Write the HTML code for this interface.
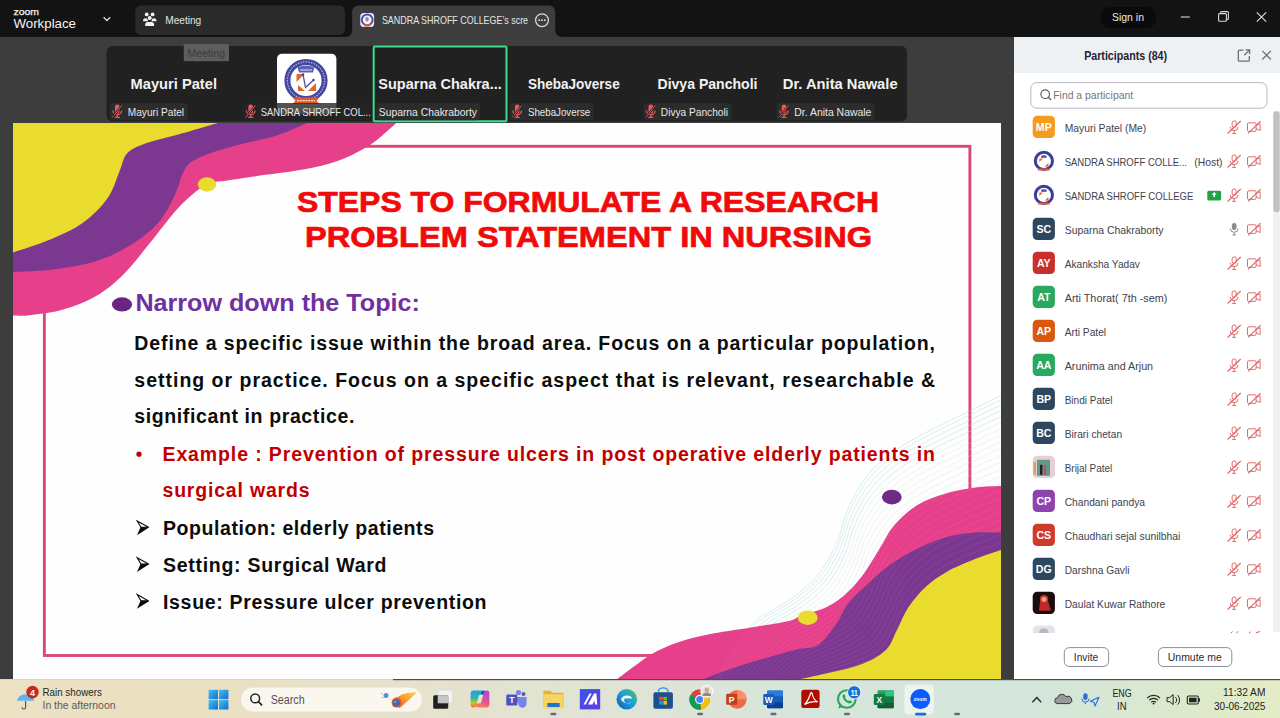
<!DOCTYPE html>
<html><head><meta charset="utf-8">
<style>
html,body{margin:0;padding:0;width:1280px;height:718px;overflow:hidden;background:#3d3d3d}
svg{display:block}
text{font-family:"Liberation Sans",sans-serif}
</style></head>
<body>
<svg width="1280" height="718" viewBox="0 0 1280 718">
<defs>
 <linearGradient id="tb" x1="0" y1="0" x2="1" y2="0">
  <stop offset="0" stop-color="#ece1c2"/>
  <stop offset="0.18" stop-color="#eae0c2"/>
  <stop offset="0.34" stop-color="#e5e2cd"/>
  <stop offset="0.5" stop-color="#dfe4d6"/>
  <stop offset="0.62" stop-color="#d7e5db"/>
  <stop offset="0.8" stop-color="#d3e6dc"/>
  <stop offset="0.9" stop-color="#dae8d0"/>
  <stop offset="1" stop-color="#e4ecc4"/>
 </linearGradient>
 <clipPath id="slideclip"><rect x="13" y="123" width="988" height="556"/></clipPath>
</defs>
<!-- main bg -->
<rect x="0" y="0" width="1280" height="718" fill="#3d3d3d"/>
<!-- TOPBAR -->
<g id="topbar">
 <rect x="0" y="0" width="1280" height="37" fill="#131313"/>
 <text x="13.5" y="14.6" font-size="9.6" fill="#f2f2f2" stroke="#f2f2f2" stroke-width="0.25" textLength="25.5" lengthAdjust="spacingAndGlyphs">zoom</text>
 <text x="13.5" y="27.5" font-size="12.8" fill="#f4f4f4" textLength="62.5" lengthAdjust="spacingAndGlyphs">Workplace</text>
 <polyline points="103.6,17.2 106.9,20.5 110.2,17.2" fill="none" stroke="#d8d8d8" stroke-width="1.3"/>
 <rect x="135.25" y="5.6" width="209.75" height="29.4" rx="6" fill="#2a2a2a"/>
 <g fill="#f4f4f4">
  <circle cx="146.7" cy="14.4" r="1.9"/><circle cx="152.6" cy="14.4" r="1.9"/><circle cx="149.7" cy="18.1" r="2"/>
  <path d="M143,21.3 a2.45,3 0 0 1 4.9,0 z"/><path d="M151.6,21.3 a2.45,3 0 0 1 4.9,0 z"/>
  <path d="M145.2,26.1 v-1.6 a2.5,2.5 0 0 1 2.5,-2.5 h3.9 a2.5,2.5 0 0 1 2.5,2.5 v1.6 z"/>
 </g>
 <text x="165.25" y="24.4" font-size="11.5" fill="#e4e4e4" textLength="36" lengthAdjust="spacingAndGlyphs">Meeting</text>
 <path d="M345,37 q7,0 7.2,-7 v-18.6 a6,6 0 0 1 6,-6 h191 a6,6 0 0 1 6,6 v18.6 q0.2,7 7.2,7 z" fill="#3d3d3d"/>
 <g>
  <rect x="360.3" y="13" width="13.8" height="14.1" rx="3.5" fill="#f4f4fa"/>
  <circle cx="367.2" cy="19.8" r="5.4" fill="none" stroke="#4f4fa6" stroke-width="2"/>
  <path d="M365,18.5 l2,-2 l2,2 l-1,3 h-2 z" fill="#9a8ab8"/>
  <path d="M363.4,24.2 h7.6 l-1,2.2 h-5.6 z" fill="#e0603a"/>
 </g>
 <text x="381.9" y="23.6" font-size="10.9" fill="#e6e6e6" textLength="146.2" lengthAdjust="spacingAndGlyphs">SANDRA SHROFF COLLEGE&#8217;s scre</text>
 <circle cx="542" cy="20.2" r="6.4" fill="none" stroke="#dcdcdc" stroke-width="1.2"/>
 <circle cx="539.2" cy="20.2" r="0.9" fill="#e6e6e6"/><circle cx="542" cy="20.2" r="0.9" fill="#e6e6e6"/><circle cx="544.8" cy="20.2" r="0.9" fill="#e6e6e6"/>
 <rect x="1101" y="7" width="55" height="21" rx="9" fill="#0a0a0a"/>
 <text x="1112" y="21" font-size="11.6" fill="#e8e8e8" textLength="32" lengthAdjust="spacingAndGlyphs">Sign in</text>
 <line x1="1180.8" y1="17" x2="1189.8" y2="17" stroke="#d8d8d8" stroke-width="1.1"/>
 <rect x="1218.6" y="13.6" width="7.8" height="7.6" rx="1" fill="none" stroke="#d8d8d8" stroke-width="1.1"/>
 <path d="M1220.6,13.6 v-1 a1,1 0 0 1 1,-1 h5.8 a1,1 0 0 1 1,1 v5.8 a1,1 0 0 1 -1,1 h-1" fill="none" stroke="#d8d8d8" stroke-width="1.1"/>
 <path d="M1256.8,12.4 l9.4,9.2 M1266.2,12.4 l-9.4,9.2" stroke="#d8d8d8" stroke-width="1.2"/>
</g>
<!-- /TOPBAR -->
<!-- THUMBS -->
<g id="thumbs">
 <rect x="106.5" y="46" width="800.5" height="75.5" rx="6" fill="#212121"/>
 <defs>
  <g id="mmic">
   <path d="M3.2,0.8 a2.3,2.3 0 0 1 4.6,0 v4.6 a2.3,2.3 0 0 1 -4.6,0 z" fill="#e35b5b"/>
   <path d="M1.2,4.6 a4.3,4.3 0 0 0 8.6,0" fill="none" stroke="#e35b5b" stroke-width="1.3"/>
   <path d="M5.5,9 v2.2 M3,11.3 h5" stroke="#e35b5b" stroke-width="1.3"/>
   <path d="M0.3,11.6 L10.5,-0.8" stroke="#1f1f1f" stroke-width="2.2"/>
   <path d="M0.6,11.4 L10.2,-0.6" stroke="#e35b5b" stroke-width="1"/>
  </g>
 </defs>
 <!-- tile 1 -->
 <text x="130.6" y="89.2" font-size="14.6" font-weight="bold" fill="#f2f2f2" textLength="86.4" lengthAdjust="spacingAndGlyphs">Mayuri Patel</text>
 <rect x="109.9" y="103" width="78" height="17.3" rx="4" fill="#2c2c2c"/>
 <use href="#mmic" x="111.8" y="106"/>
 <text x="127.8" y="115.7" font-size="11.6" fill="#e8e8e8" textLength="56.3" lengthAdjust="spacingAndGlyphs">Mayuri Patel</text>
 <!-- tooltip -->
 <rect x="183.8" y="44" width="45.2" height="17.2" fill="#5e5e5e"/>
 <text x="187.5" y="56.8" font-size="11" fill="#3c3c3c" textLength="37.5" lengthAdjust="spacingAndGlyphs">Meeting</text>
 <!-- tile 2 logo -->
 <rect x="277" y="53.7" width="59.4" height="60" rx="5" fill="#ffffff"/>
 <circle cx="306" cy="80.5" r="18.6" fill="none" stroke="#4447a2" stroke-width="6"/>
 <circle cx="306" cy="80.5" r="18.6" fill="none" stroke="#c8c8e8" stroke-width="1.2" stroke-dasharray="1.6 1.1" transform="rotate(-200 306 80.5)" stroke-opacity="0.8"/>
 <path d="M297.5,67.5 q8.5,-4 17,0 l-1.5,5 h-14 z" fill="#5d60b8"/>
 <path d="M300,70 h12" stroke="#ffffff" stroke-width="0.8"/>
 <path d="M296.5,74 h8 l-8,8 z M316,83 v8 h-8 z M298,85 l7,6 h-7 z" fill="#e6632e"/>
 <path d="M303,74.5 l2.5,13 l8,-7.5" fill="none" stroke="#4a4f9a" stroke-width="1.3"/>
 <circle cx="303" cy="74.5" r="1.2" fill="#3a3f8a"/><circle cx="313.5" cy="80" r="1.2" fill="#3a3f8a"/>
 <path d="M292.5,97.5 l3,3.2 l-3,3.3 h27 l-3,-3.3 l3,-3.2 z" fill="#e45a2c"/>
 <path d="M297,100.7 h18" stroke="#ffd8c8" stroke-width="1.2" stroke-dasharray="2 0.8"/>
 <rect x="243.3" y="103" width="128" height="17.3" rx="4" fill="#262626" fill-opacity="0.8"/>
 <use href="#mmic" x="245.2" y="106"/>
 <text x="260.8" y="115.7" font-size="11.6" fill="#e8e8e8" textLength="110" lengthAdjust="spacingAndGlyphs">SANDRA SHROFF COL...</text>
 <!-- tile 3 active -->
 <rect x="373.7" y="46.6" width="132.8" height="74.6" rx="1" fill="none" stroke="#3bdc8e" stroke-width="2"/>
 <text x="378.3" y="89.2" font-size="14.6" font-weight="bold" fill="#f2f2f2" textLength="123.5" lengthAdjust="spacingAndGlyphs">Suparna Chakra...</text>
 <rect x="376.3" y="103" width="104" height="17.3" rx="4" fill="#2c2c2c"/>
 <text x="378.8" y="115.7" font-size="11.6" fill="#e8e8e8" textLength="98.2" lengthAdjust="spacingAndGlyphs">Suparna Chakraborty</text>
 <!-- tile 4 -->
 <text x="527.9" y="89.2" font-size="14.6" font-weight="bold" fill="#f2f2f2" textLength="91.8" lengthAdjust="spacingAndGlyphs">ShebaJoverse</text>
 <rect x="509.8" y="103" width="83.7" height="17.3" rx="4" fill="#2c2c2c"/>
 <use href="#mmic" x="511.7" y="106"/>
 <text x="527.9" y="115.7" font-size="11.6" fill="#e8e8e8" textLength="62.3" lengthAdjust="spacingAndGlyphs">ShebaJoverse</text>
 <!-- tile 5 -->
 <text x="657.5" y="89.2" font-size="14.6" font-weight="bold" fill="#f2f2f2" textLength="100" lengthAdjust="spacingAndGlyphs">Divya Pancholi</text>
 <rect x="643.4" y="103" width="87.9" height="17.3" rx="4" fill="#2c2c2c"/>
 <use href="#mmic" x="645.3" y="106"/>
 <text x="660.8" y="115.7" font-size="11.6" fill="#e8e8e8" textLength="67.2" lengthAdjust="spacingAndGlyphs">Divya Pancholi</text>
 <!-- tile 6 -->
 <text x="782.8" y="89.2" font-size="14.6" font-weight="bold" fill="#f2f2f2" textLength="114.8" lengthAdjust="spacingAndGlyphs">Dr. Anita Nawale</text>
 <rect x="776.6" y="103" width="98.1" height="17.3" rx="4" fill="#2c2c2c"/>
 <use href="#mmic" x="778.5" y="106"/>
 <text x="794.3" y="115.7" font-size="11.6" fill="#e8e8e8" textLength="77.1" lengthAdjust="spacingAndGlyphs">Dr. Anita Nawale</text>
</g>
<!-- /THUMBS -->
<!-- SLIDE -->
<g id="slide">
 <rect x="13" y="123" width="988" height="556" fill="#fefefe"/>
 <g clip-path="url(#slideclip)">
  <rect x="44.35" y="146.3" width="925.55" height="509.2" fill="none" stroke="#da487a" stroke-width="2.9"/>
  <path d="M13,118 L401.0,118 L396.0,123.2 C393.4,125.5 385.9,132.6 380.5,136.9 C375.1,141.2 370.5,145.0 363.3,149.0 C356.1,153.0 347.5,157.6 337.5,161.0 C327.5,164.4 316.0,167.2 303.1,169.6 C290.2,172.0 273.1,173.8 260.2,175.6 C247.3,177.4 234.4,179.4 225.8,180.7 C217.2,182.0 214.3,180.9 208.6,183.3 C202.8,185.8 197.0,190.6 191.3,195.4 C185.6,200.2 181.1,204.6 174.6,212.0 C168.1,219.4 160.7,229.8 152.3,240.0 C143.9,250.2 133.7,264.1 124.4,273.4 C115.1,282.7 106.8,289.7 96.6,295.7 C86.4,301.7 74.2,306.4 63.0,309.6 C51.9,312.9 38.0,314.2 29.7,315.2 C21.4,316.2 15.8,315.4 13.0,315.5 L13,118 z" fill="#e6408b"/>
  <path d="M13,118 L311.6,118 L306.6,123.2 C301.7,125.2 287.9,131.8 277.3,135.2 C266.7,138.6 253.7,141.0 243.0,143.8 C232.3,146.6 221.6,149.2 213.0,152.2 C204.4,155.2 196.3,158.5 191.3,162.0 C186.3,165.5 185.8,167.4 183.0,173.0 C180.2,178.6 178.8,187.0 174.6,195.4 C170.4,203.8 165.2,214.9 157.8,223.3 C150.4,231.7 140.2,239.3 130.0,245.6 C119.8,251.9 109.1,257.0 96.6,260.9 C84.1,264.8 68.7,267.3 54.8,269.2 C40.9,271.1 20.0,271.5 13.0,272.0 L13,118 z" fill="#7c3890"/>
  <path d="M13,118 L222.2,118 L217.2,123.2 C211.0,125.0 192.2,130.5 180.0,134.0 C167.8,137.5 152.8,140.7 144.0,144.0 C135.2,147.3 131.0,149.3 127.0,153.6 C123.0,157.9 123.2,162.6 120.0,170.0 C116.8,177.4 113.9,189.2 107.7,198.0 C101.5,206.8 92.4,216.0 82.6,223.0 C72.8,230.0 60.6,235.1 49.0,240.0 C37.4,244.9 19.0,250.4 13.0,252.5 L13,118 z" fill="#e9dc2f"/>
  <ellipse cx="207" cy="184.5" rx="9.2" ry="7.2" fill="#e9dc2f"/>
<!--LINES-->
  <g fill="none" stroke="#9fd3d3" stroke-width="0.55" stroke-opacity="0.75"><path d="M690.0,712.0 C693.9,707.0 706.1,692.4 713.2,681.9 C720.4,671.5 725.8,659.7 732.9,649.5 C740.1,639.3 746.8,628.7 756.1,620.6 C765.3,612.4 778.3,608.1 788.4,600.7 C798.6,593.3 809.0,585.6 816.9,576.2 C824.9,566.8 830.9,555.6 836.2,544.3 C841.4,533.0 842.9,519.7 848.1,508.2 C853.3,496.8 859.6,485.1 867.3,475.5 C875.1,466.0 884.6,458.2 894.7,450.9 C904.7,443.6 916.3,437.7 927.5,431.7 C938.6,425.7 950.2,420.5 961.5,414.9 C972.9,409.3 984.2,403.6 995.6,398.1 C1007.0,392.7 1024.3,384.7 1030.0,382.0"/><path d="M692.4,711.7 C696.3,706.7 708.4,692.3 715.6,682.1 C722.7,671.8 728.2,660.2 735.3,650.2 C742.4,640.2 749.2,629.9 758.4,621.9 C767.6,613.9 780.5,609.6 790.5,602.3 C800.6,595.0 810.9,587.5 818.8,578.2 C826.7,568.9 832.7,557.8 837.8,546.6 C843.0,535.4 844.6,522.3 849.7,511.0 C854.9,499.6 861.1,488.1 868.8,478.6 C876.5,469.2 886.0,461.5 896.0,454.2 C905.9,447.0 917.4,441.2 928.4,435.3 C939.5,429.4 950.9,424.2 962.2,418.7 C973.4,413.2 984.6,407.6 995.9,402.2 C1007.2,396.8 1024.3,389.0 1030.0,386.3"/><path d="M695.4,711.3 C699.3,706.4 711.3,692.3 718.4,682.3 C725.6,672.2 731.0,660.8 738.2,651.0 C745.3,641.2 752.2,631.3 761.3,623.5 C770.5,615.7 783.1,611.5 793.1,604.3 C803.0,597.2 813.3,589.8 821.1,580.7 C828.9,571.5 834.7,560.5 839.8,549.4 C845.0,538.3 846.6,525.4 851.7,514.3 C856.9,503.1 863.1,491.7 870.7,482.4 C878.3,473.1 887.7,465.5 897.5,458.4 C907.3,451.2 918.7,445.6 929.6,439.7 C940.5,433.9 951.8,428.8 962.9,423.4 C974.0,417.9 985.1,412.5 996.3,407.2 C1007.5,401.9 1024.4,394.2 1030.0,391.6"/><path d="M698.6,710.8 C702.5,706.1 714.4,692.3 721.6,682.4 C728.7,672.6 734.2,661.5 741.3,651.9 C748.5,642.4 755.4,632.8 764.4,625.2 C773.5,617.7 786.0,613.5 795.8,606.5 C805.7,599.5 815.8,592.3 823.5,583.3 C831.2,574.3 837.0,563.4 842.0,552.5 C847.1,541.5 848.8,528.8 853.9,517.8 C859.0,506.8 865.1,495.7 872.7,486.5 C880.2,477.3 889.5,469.8 899.2,462.8 C908.9,455.8 920.1,450.2 930.9,444.5 C941.6,438.7 952.8,433.7 963.8,428.4 C974.7,423.1 985.7,417.7 996.7,412.6 C1007.8,407.4 1024.5,399.9 1030.0,397.4"/><path d="M702.0,710.4 C705.8,705.8 717.7,692.2 724.8,682.6 C731.9,673.1 737.4,662.2 744.6,652.9 C751.7,643.6 758.7,634.4 767.7,627.1 C776.7,619.7 789.0,615.6 798.7,608.8 C808.5,602.0 818.5,594.9 826.1,586.1 C833.7,577.2 839.3,566.4 844.3,555.7 C849.3,544.9 851.1,532.4 856.1,521.6 C861.2,510.8 867.3,499.8 874.8,490.8 C882.3,481.8 891.4,474.4 901.0,467.5 C910.5,460.6 921.6,455.1 932.2,449.5 C942.8,443.9 953.8,438.9 964.6,433.7 C975.5,428.5 986.3,423.3 997.2,418.2 C1008.1,413.2 1024.5,405.9 1030.0,403.4"/></g>
  <g fill="none" stroke="#c6d2d6" stroke-width="0.5" stroke-opacity="0.6"><path d="M705.6,709.9 C709.3,705.4 721.1,692.2 728.2,682.8 C735.3,673.5 740.8,662.9 748.0,653.9 C755.1,644.9 762.2,636.1 771.1,629.0 C780.1,621.8 792.1,617.9 801.7,611.2 C811.3,604.5 821.3,597.7 828.8,589.0 C836.3,580.2 841.8,569.6 846.7,559.0 C851.7,548.4 853.4,536.1 858.5,525.5 C863.5,514.9 869.6,504.2 877.0,495.3 C884.4,486.4 893.4,479.1 902.8,472.4 C912.2,465.6 923.1,460.2 933.6,454.7 C944.0,449.2 954.9,444.3 965.5,439.2 C976.2,434.1 986.9,429.0 997.6,424.1 C1008.4,419.2 1024.6,412.1 1030.0,409.7"/><path d="M709.2,709.4 C712.9,705.0 724.7,692.1 731.7,683.1 C738.8,674.0 744.4,663.6 751.5,654.9 C758.7,646.2 765.7,637.8 774.6,630.9 C783.5,624.0 795.3,620.2 804.8,613.7 C814.3,607.2 824.2,600.5 831.6,591.9 C839.0,583.4 844.3,572.8 849.2,562.4 C854.1,552.0 855.9,539.9 860.9,529.5 C865.9,519.1 871.9,508.6 879.2,499.9 C886.5,491.2 895.4,484.0 904.7,477.4 C914.0,470.8 924.7,465.5 935.0,460.1 C945.3,454.6 955.9,449.9 966.5,444.9 C977.0,439.9 987.5,435.0 998.1,430.2 C1008.7,425.4 1024.7,418.5 1030.0,416.1"/><path d="M712.9,708.9 C716.6,704.7 728.3,692.1 735.3,683.3 C742.3,674.4 748.0,664.3 755.1,656.0 C762.3,647.6 769.4,639.5 778.2,632.9 C787.0,626.3 798.6,622.5 808.0,616.2 C817.4,609.9 827.1,603.3 834.4,595.0 C841.7,586.6 846.9,576.1 851.7,565.9 C856.6,555.7 858.4,543.9 863.4,533.7 C868.3,523.5 874.3,513.2 881.6,504.6 C888.8,496.1 897.5,489.1 906.7,482.6 C915.8,476.0 926.3,470.9 936.5,465.6 C946.6,460.2 957.1,455.6 967.4,450.7 C977.8,445.9 988.1,441.0 998.6,436.4 C1009.0,431.7 1024.8,425.0 1030.0,422.7"/><path d="M716.7,708.4 C720.4,704.3 731.9,692.1 739.0,683.5 C746.0,674.9 751.6,665.1 758.8,657.0 C765.9,648.9 773.1,641.3 781.9,635.0 C790.6,628.6 802.0,624.9 811.3,618.8 C820.5,612.6 830.2,606.3 837.3,598.1 C844.5,589.9 849.6,579.5 854.3,569.5 C859.1,559.5 861.0,547.9 865.9,537.9 C870.8,527.9 876.8,517.8 883.9,509.5 C891.0,501.1 899.6,494.2 908.6,487.8 C917.7,481.4 928.0,476.4 938.0,471.2 C947.9,466.0 958.2,461.4 968.4,456.7 C978.6,451.9 988.8,447.2 999.0,442.7 C1009.3,438.2 1024.8,431.7 1030.0,429.5"/><path d="M720.6,707.9 C724.3,703.9 735.7,692.0 742.7,683.7 C749.7,675.4 755.4,665.9 762.5,658.1 C769.7,650.3 777.0,643.2 785.6,637.0 C794.3,630.9 805.5,627.3 814.6,621.4 C823.7,615.4 833.2,609.3 840.3,601.3 C847.4,593.2 852.3,583.0 857.0,573.2 C861.7,563.3 863.6,552.0 868.5,542.2 C873.4,532.4 879.3,522.6 886.3,514.4 C893.3,506.2 901.8,499.4 910.7,493.2 C919.5,486.9 929.7,482.0 939.5,476.9 C949.3,471.8 959.4,467.4 969.4,462.7 C979.4,458.1 989.4,453.6 999.5,449.2 C1009.6,444.8 1024.9,438.5 1030.0,436.4"/><path d="M724.5,707.4 C728.2,703.5 739.5,692.0 746.5,684.0 C753.5,675.9 759.2,666.7 766.4,659.2 C773.5,651.8 780.8,645.0 789.4,639.2 C798.0,633.3 809.0,629.8 817.9,624.1 C826.9,618.3 836.4,612.3 843.3,604.5 C850.3,596.6 855.0,586.5 859.6,576.9 C864.3,567.2 866.3,556.1 871.1,546.6 C876.0,537.0 881.8,527.4 888.8,519.4 C895.7,511.4 904.0,504.7 912.7,498.6 C921.4,492.5 931.4,487.7 941.0,482.7 C950.6,477.8 960.6,473.4 970.4,468.9 C980.2,464.4 990.1,460.0 1000.1,455.8 C1010.0,451.5 1025.0,445.5 1030.0,443.4"/><path d="M728.5,706.9 C732.2,703.1 743.4,691.9 750.3,684.2 C757.3,676.4 763.1,667.5 770.2,660.3 C777.4,653.2 784.8,646.9 793.3,641.3 C801.8,635.7 812.5,632.4 821.4,626.8 C830.2,621.2 839.6,615.4 846.4,607.7 C853.2,600.1 857.8,590.1 862.4,580.7 C866.9,571.2 869.0,560.3 873.8,551.0 C878.6,541.6 884.4,532.3 891.2,524.5 C898.1,516.7 906.3,510.1 914.8,504.2 C923.4,498.2 933.2,493.5 942.6,488.6 C952.0,483.8 961.8,479.5 971.4,475.2 C981.1,470.8 990.8,466.5 1000.6,462.4 C1010.3,458.3 1025.1,452.5 1030.0,450.5"/><path d="M732.6,706.3 C736.2,702.7 747.3,691.9 754.2,684.4 C761.2,676.9 767.0,668.3 774.2,661.5 C781.3,654.7 788.8,648.8 797.2,643.5 C805.7,638.2 816.1,634.9 824.8,629.5 C833.5,624.1 842.8,618.6 849.5,611.1 C856.2,603.6 860.6,593.7 865.1,584.5 C869.6,575.2 871.7,564.6 876.5,555.5 C881.3,546.3 887.0,537.3 893.8,529.7 C900.5,522.0 908.5,515.6 916.9,509.8 C925.3,503.9 934.9,499.3 944.2,494.6 C953.4,489.9 963.0,485.7 972.5,481.5 C982.0,477.3 991.5,473.2 1001.1,469.2 C1010.7,465.2 1025.2,459.6 1030.0,457.7"/><path d="M736.7,705.8 C740.3,702.3 751.3,691.8 758.2,684.7 C765.1,677.5 771.0,669.1 778.1,662.6 C785.3,656.2 792.8,650.8 801.2,645.7 C809.6,640.7 819.7,637.5 828.3,632.3 C836.9,627.1 846.0,621.7 852.6,614.4 C859.2,607.1 863.5,597.4 867.9,588.4 C872.4,579.3 874.5,569.0 879.2,560.0 C883.9,551.1 889.7,542.3 896.3,534.9 C903.0,527.4 910.8,521.2 919.1,515.5 C927.3,509.8 936.7,505.3 945.8,500.7 C954.9,496.1 964.2,492.0 973.5,487.9 C982.8,483.8 992.2,479.9 1001.6,476.1 C1011.0,472.2 1025.3,466.9 1030.0,465.0"/><path d="M740.9,705.2 C744.4,701.8 755.3,691.8 762.2,684.9 C769.1,678.0 775.0,670.0 782.1,663.8 C789.3,657.7 796.9,652.7 805.2,648.0 C813.5,643.2 823.4,640.1 831.9,635.1 C840.3,630.1 849.3,625.0 855.8,617.8 C862.3,610.7 866.4,601.1 870.8,592.3 C875.1,583.4 877.3,573.3 882.0,564.7 C886.7,556.0 892.3,547.4 898.9,540.2 C905.4,532.9 913.2,526.8 921.3,521.2 C929.4,515.6 938.5,511.3 947.4,506.8 C956.3,502.3 965.5,498.4 974.6,494.4 C983.7,490.5 992.9,486.7 1002.1,483.0 C1011.4,479.3 1025.4,474.2 1030.0,472.4"/><path d="M745.1,704.7 C748.6,701.4 759.4,691.8 766.2,685.1 C773.1,678.5 779.0,670.8 786.2,665.0 C793.4,659.2 801.0,654.7 809.3,650.2 C817.5,645.7 827.2,642.8 835.5,637.9 C843.8,633.1 852.7,628.2 859.0,621.3 C865.4,614.3 869.3,604.9 873.6,596.2 C877.9,587.6 880.1,577.8 884.8,569.3 C889.4,560.9 895.1,552.5 901.5,545.5 C907.9,538.4 915.5,532.4 923.5,527.0 C931.4,521.6 940.4,517.3 949.1,513.0 C957.8,508.7 966.7,504.8 975.7,501.0 C984.6,497.2 993.6,493.5 1002.7,490.0 C1011.7,486.5 1025.4,481.6 1030.0,479.9"/><path d="M749.3,704.1 C752.8,701.0 763.5,691.7 770.3,685.4 C777.2,679.1 783.1,671.7 790.3,666.2 C797.5,660.7 805.2,656.7 813.3,652.5 C821.5,648.3 830.9,645.4 839.1,640.8 C847.2,636.2 856.0,631.5 862.3,624.7 C868.5,618.0 872.3,608.7 876.5,600.2 C880.7,591.8 883.0,582.2 887.6,574.0 C892.2,565.8 897.8,557.7 904.1,550.9 C910.5,544.0 917.9,538.1 925.7,532.9 C933.4,527.6 942.2,523.5 950.7,519.3 C959.2,515.1 968.0,511.3 976.8,507.6 C985.5,503.9 994.4,500.4 1003.2,497.1 C1012.1,493.7 1025.5,489.0 1030.0,487.4"/><path d="M753.6,703.5 C757.1,700.5 767.6,691.7 774.5,685.6 C781.3,679.6 787.3,672.5 794.5,667.4 C801.6,662.2 809.4,658.8 817.5,654.8 C825.5,650.9 834.7,648.1 842.7,643.7 C850.8,639.3 859.4,634.8 865.5,628.2 C871.7,621.7 875.3,612.5 879.4,604.3 C883.6,596.0 885.9,586.8 890.5,578.8 C895.0,570.8 900.5,563.0 906.8,556.3 C913.0,549.7 920.3,543.9 927.9,538.8 C935.5,533.7 944.1,529.7 952.4,525.6 C960.7,521.5 969.3,517.9 977.9,514.3 C986.4,510.8 995.1,507.4 1003.8,504.2 C1012.5,501.0 1025.6,496.5 1030.0,495.0"/><path d="M757.9,702.9 C761.3,700.1 771.8,691.6 778.6,685.9 C785.4,680.2 791.5,673.4 798.6,668.6 C805.8,663.8 813.7,660.8 821.7,657.1 C829.6,653.5 838.6,650.9 846.4,646.6 C854.3,642.4 862.9,638.2 868.8,631.8 C874.8,625.4 878.3,616.4 882.3,608.4 C886.4,600.3 888.8,591.3 893.3,583.6 C897.9,575.8 903.3,568.3 909.5,561.8 C915.6,555.3 922.7,549.7 930.2,544.8 C937.6,539.8 946.0,535.9 954.1,532.0 C962.2,528.0 970.6,524.5 979.0,521.1 C987.4,517.7 995.8,514.5 1004.3,511.4 C1012.8,508.3 1025.7,504.1 1030.0,502.7"/><path d="M762.2,702.4 C765.7,699.7 776.0,691.6 782.8,686.1 C789.6,680.7 795.7,674.3 802.9,669.8 C810.0,665.4 818.0,662.9 825.9,659.5 C833.7,656.1 842.4,653.6 850.2,649.6 C857.9,645.6 866.3,641.5 872.2,635.3 C878.0,629.1 881.3,620.3 885.3,612.5 C889.3,604.6 891.8,595.9 896.2,588.4 C900.7,580.9 906.1,573.6 912.2,567.3 C918.2,561.1 925.2,555.6 932.5,550.8 C939.7,546.0 947.9,542.2 955.8,538.4 C963.7,534.6 971.9,531.2 980.1,527.9 C988.3,524.6 996.6,521.6 1004.9,518.7 C1013.2,515.8 1025.8,511.8 1030.0,510.4"/><path d="M766.6,701.8 C770.0,699.2 780.3,691.5 787.0,686.4 C793.8,681.3 799.9,675.1 807.1,671.1 C814.3,667.0 822.3,664.9 830.1,661.9 C837.9,658.8 846.3,656.4 853.9,652.6 C861.5,648.7 869.8,644.9 875.5,638.9 C881.3,632.9 884.4,624.2 888.3,616.6 C892.2,609.0 894.7,600.5 899.2,593.3 C903.6,586.0 909.0,579.0 914.9,572.9 C920.8,566.9 927.6,561.5 934.8,556.9 C941.9,552.2 949.8,548.6 957.5,544.9 C965.3,541.2 973.2,537.9 981.2,534.8 C989.2,531.6 997.3,528.8 1005.5,526.0 C1013.6,523.2 1025.9,519.5 1030.0,518.2"/><path d="M771.1,701.2 C774.4,698.8 784.6,691.5 791.3,686.7 C798.0,681.8 804.2,676.0 811.4,672.3 C818.6,668.6 826.7,667.0 834.4,664.2 C842.1,661.5 850.3,659.2 857.7,655.6 C865.1,651.9 873.3,648.3 878.9,642.5 C884.5,636.8 887.4,628.2 891.3,620.8 C895.2,613.4 897.7,605.2 902.1,598.2 C906.5,591.1 911.8,584.4 917.6,578.5 C923.5,572.7 930.1,567.5 937.1,563.0 C944.0,558.5 951.7,555.0 959.3,551.4 C966.8,547.9 974.6,544.7 982.4,541.7 C990.2,538.7 998.1,536.0 1006.0,533.4 C1014.0,530.8 1026.0,527.3 1030.0,526.1"/><path d="M775.5,700.6 C778.9,698.3 788.9,691.4 795.6,686.9 C802.3,682.4 808.5,676.9 815.7,673.6 C822.9,670.2 831.0,669.1 838.7,666.6 C846.3,664.1 854.2,662.0 861.5,658.6 C868.8,655.2 876.9,651.8 882.3,646.2 C887.8,640.6 890.5,632.2 894.3,625.0 C898.1,617.8 900.7,609.9 905.1,603.1 C909.4,596.3 914.7,589.9 920.4,584.2 C926.1,578.5 932.6,573.5 939.4,569.2 C946.2,564.8 953.6,561.4 961.0,558.0 C968.4,554.6 975.9,551.5 983.5,548.7 C991.1,545.8 998.8,543.3 1006.6,540.8 C1014.3,538.4 1026.1,535.2 1030.0,534.0"/><path d="M780.0,700.0 C783.3,697.9 793.2,691.4 799.9,687.2 C806.6,683.0 812.8,677.8 820.0,674.8 C827.2,671.8 835.5,671.3 843.0,669.1 C850.6,666.9 858.2,664.8 865.3,661.6 C872.4,658.4 880.4,655.3 885.8,649.9 C891.1,644.5 893.7,636.2 897.4,629.2 C901.1,622.3 903.8,614.6 908.1,608.1 C912.4,601.5 917.6,595.4 923.2,589.9 C928.8,584.5 935.1,579.6 941.7,575.4 C948.3,571.1 955.6,567.9 962.8,564.6 C969.9,561.3 977.3,558.4 984.7,555.7 C992.1,553.0 999.6,550.6 1007.2,548.3 C1014.7,546.0 1026.2,543.0 1030.0,542.0"/></g>
<!--/LINES-->
  <path d="M612.0,684.0 C613.0,683.0 614.3,681.4 618.2,678.3 C622.1,675.2 629.7,669.5 635.4,665.4 C641.1,661.2 645.5,657.3 652.6,653.4 C659.8,649.5 668.3,645.5 678.3,642.2 C688.3,638.9 699.8,636.2 712.7,633.6 C725.6,631.0 742.8,628.9 755.7,626.7 C768.6,624.6 782.5,622.6 790.0,620.7 C797.5,618.9 794.8,617.9 801.0,615.6 C807.2,613.3 819.4,610.7 827.2,606.8 C835.0,602.9 841.3,598.1 847.6,592.3 C853.9,586.5 859.7,579.2 865.0,571.9 C870.3,564.6 874.7,556.4 879.6,548.6 C884.5,540.8 887.9,532.6 894.2,525.3 C900.5,518.0 908.7,510.3 917.4,505.0 C926.1,499.7 936.9,496.2 946.6,493.3 C956.3,490.4 966.6,488.7 975.7,487.5 C984.8,486.3 995.3,486.2 1001.0,486.0 C1006.7,485.8 1008.5,486.0 1010.0,486.0 L1010,690 L612.0,690 z" fill="#e6408b"/>
  <path d="M698.0,684.0 C699.3,683.0 699.0,681.2 705.8,678.3 C712.5,675.3 727.3,670.0 738.5,666.3 C749.7,662.6 762.9,658.9 772.9,656.0 C782.9,653.1 791.1,650.9 798.7,649.0 C806.3,647.1 812.3,648.8 818.5,644.7 C824.7,640.6 831.1,631.1 836.0,624.3 C840.9,617.5 842.8,610.3 847.6,604.0 C852.4,597.7 858.2,592.7 865.0,586.4 C871.8,580.1 879.6,572.3 888.3,566.0 C897.0,559.7 907.7,553.4 917.4,548.6 C927.1,543.8 936.9,539.7 946.6,537.0 C956.3,534.3 966.6,533.3 975.7,532.6 C984.8,531.9 995.3,532.6 1001.0,532.6 C1006.7,532.6 1008.5,532.6 1010.0,532.6 L1010,690 L698.0,690 z" fill="#7c3890"/>
  <path d="M785.0,684.0 C787.7,683.2 795.4,680.5 801.0,679.0 C806.6,677.5 808.8,677.5 818.5,675.2 C828.2,672.9 848.1,669.1 859.2,665.0 C870.4,660.9 879.1,656.3 885.4,650.5 C891.7,644.7 893.1,637.3 897.0,630.0 C900.9,622.7 903.8,614.1 908.7,606.8 C913.6,599.5 919.9,592.2 926.2,586.4 C932.5,580.6 938.4,576.5 946.6,571.9 C954.9,567.3 966.6,562.4 975.7,558.8 C984.8,555.1 995.3,552.0 1001.0,550.0 C1006.7,548.0 1008.5,547.5 1010.0,547.0 L1010,690 L785.0,690 z" fill="#e9dc2f"/>
<!--WLINES-->
  <g fill="none" stroke="#ffffff" stroke-width="0.5" stroke-opacity="0.13"><path d="M690.0,712.0 C693.9,707.0 706.1,692.4 713.2,681.9 C720.4,671.5 725.8,659.7 732.9,649.5 C740.1,639.3 746.8,628.7 756.1,620.6 C765.3,612.4 778.3,608.1 788.4,600.7 C798.6,593.3 809.0,585.6 816.9,576.2 C824.9,566.8 830.9,555.6 836.2,544.3 C841.4,533.0 842.9,519.7 848.1,508.2 C853.3,496.8 859.6,485.1 867.3,475.5 C875.1,466.0 884.6,458.2 894.7,450.9 C904.7,443.6 916.3,437.7 927.5,431.7 C938.6,425.7 950.2,420.5 961.5,414.9 C972.9,409.3 984.2,403.6 995.6,398.1 C1007.0,392.7 1024.3,384.7 1030.0,382.0"/><path d="M692.4,711.7 C696.3,706.7 708.4,692.3 715.6,682.1 C722.7,671.8 728.2,660.2 735.3,650.2 C742.4,640.2 749.2,629.9 758.4,621.9 C767.6,613.9 780.5,609.6 790.5,602.3 C800.6,595.0 810.9,587.5 818.8,578.2 C826.7,568.9 832.7,557.8 837.8,546.6 C843.0,535.4 844.6,522.3 849.7,511.0 C854.9,499.6 861.1,488.1 868.8,478.6 C876.5,469.2 886.0,461.5 896.0,454.2 C905.9,447.0 917.4,441.2 928.4,435.3 C939.5,429.4 950.9,424.2 962.2,418.7 C973.4,413.2 984.6,407.6 995.9,402.2 C1007.2,396.8 1024.3,389.0 1030.0,386.3"/><path d="M695.4,711.3 C699.3,706.4 711.3,692.3 718.4,682.3 C725.6,672.2 731.0,660.8 738.2,651.0 C745.3,641.2 752.2,631.3 761.3,623.5 C770.5,615.7 783.1,611.5 793.1,604.3 C803.0,597.2 813.3,589.8 821.1,580.7 C828.9,571.5 834.7,560.5 839.8,549.4 C845.0,538.3 846.6,525.4 851.7,514.3 C856.9,503.1 863.1,491.7 870.7,482.4 C878.3,473.1 887.7,465.5 897.5,458.4 C907.3,451.2 918.7,445.6 929.6,439.7 C940.5,433.9 951.8,428.8 962.9,423.4 C974.0,417.9 985.1,412.5 996.3,407.2 C1007.5,401.9 1024.4,394.2 1030.0,391.6"/><path d="M698.6,710.8 C702.5,706.1 714.4,692.3 721.6,682.4 C728.7,672.6 734.2,661.5 741.3,651.9 C748.5,642.4 755.4,632.8 764.4,625.2 C773.5,617.7 786.0,613.5 795.8,606.5 C805.7,599.5 815.8,592.3 823.5,583.3 C831.2,574.3 837.0,563.4 842.0,552.5 C847.1,541.5 848.8,528.8 853.9,517.8 C859.0,506.8 865.1,495.7 872.7,486.5 C880.2,477.3 889.5,469.8 899.2,462.8 C908.9,455.8 920.1,450.2 930.9,444.5 C941.6,438.7 952.8,433.7 963.8,428.4 C974.7,423.1 985.7,417.7 996.7,412.6 C1007.8,407.4 1024.5,399.9 1030.0,397.4"/><path d="M702.0,710.4 C705.8,705.8 717.7,692.2 724.8,682.6 C731.9,673.1 737.4,662.2 744.6,652.9 C751.7,643.6 758.7,634.4 767.7,627.1 C776.7,619.7 789.0,615.6 798.7,608.8 C808.5,602.0 818.5,594.9 826.1,586.1 C833.7,577.2 839.3,566.4 844.3,555.7 C849.3,544.9 851.1,532.4 856.1,521.6 C861.2,510.8 867.3,499.8 874.8,490.8 C882.3,481.8 891.4,474.4 901.0,467.5 C910.5,460.6 921.6,455.1 932.2,449.5 C942.8,443.9 953.8,438.9 964.6,433.7 C975.5,428.5 986.3,423.3 997.2,418.2 C1008.1,413.2 1024.5,405.9 1030.0,403.4"/><path d="M705.6,709.9 C709.3,705.4 721.1,692.2 728.2,682.8 C735.3,673.5 740.8,662.9 748.0,653.9 C755.1,644.9 762.2,636.1 771.1,629.0 C780.1,621.8 792.1,617.9 801.7,611.2 C811.3,604.5 821.3,597.7 828.8,589.0 C836.3,580.2 841.8,569.6 846.7,559.0 C851.7,548.4 853.4,536.1 858.5,525.5 C863.5,514.9 869.6,504.2 877.0,495.3 C884.4,486.4 893.4,479.1 902.8,472.4 C912.2,465.6 923.1,460.2 933.6,454.7 C944.0,449.2 954.9,444.3 965.5,439.2 C976.2,434.1 986.9,429.0 997.6,424.1 C1008.4,419.2 1024.6,412.1 1030.0,409.7"/><path d="M709.2,709.4 C712.9,705.0 724.7,692.1 731.7,683.1 C738.8,674.0 744.4,663.6 751.5,654.9 C758.7,646.2 765.7,637.8 774.6,630.9 C783.5,624.0 795.3,620.2 804.8,613.7 C814.3,607.2 824.2,600.5 831.6,591.9 C839.0,583.4 844.3,572.8 849.2,562.4 C854.1,552.0 855.9,539.9 860.9,529.5 C865.9,519.1 871.9,508.6 879.2,499.9 C886.5,491.2 895.4,484.0 904.7,477.4 C914.0,470.8 924.7,465.5 935.0,460.1 C945.3,454.6 955.9,449.9 966.5,444.9 C977.0,439.9 987.5,435.0 998.1,430.2 C1008.7,425.4 1024.7,418.5 1030.0,416.1"/><path d="M712.9,708.9 C716.6,704.7 728.3,692.1 735.3,683.3 C742.3,674.4 748.0,664.3 755.1,656.0 C762.3,647.6 769.4,639.5 778.2,632.9 C787.0,626.3 798.6,622.5 808.0,616.2 C817.4,609.9 827.1,603.3 834.4,595.0 C841.7,586.6 846.9,576.1 851.7,565.9 C856.6,555.7 858.4,543.9 863.4,533.7 C868.3,523.5 874.3,513.2 881.6,504.6 C888.8,496.1 897.5,489.1 906.7,482.6 C915.8,476.0 926.3,470.9 936.5,465.6 C946.6,460.2 957.1,455.6 967.4,450.7 C977.8,445.9 988.1,441.0 998.6,436.4 C1009.0,431.7 1024.8,425.0 1030.0,422.7"/><path d="M716.7,708.4 C720.4,704.3 731.9,692.1 739.0,683.5 C746.0,674.9 751.6,665.1 758.8,657.0 C765.9,648.9 773.1,641.3 781.9,635.0 C790.6,628.6 802.0,624.9 811.3,618.8 C820.5,612.6 830.2,606.3 837.3,598.1 C844.5,589.9 849.6,579.5 854.3,569.5 C859.1,559.5 861.0,547.9 865.9,537.9 C870.8,527.9 876.8,517.8 883.9,509.5 C891.0,501.1 899.6,494.2 908.6,487.8 C917.7,481.4 928.0,476.4 938.0,471.2 C947.9,466.0 958.2,461.4 968.4,456.7 C978.6,451.9 988.8,447.2 999.0,442.7 C1009.3,438.2 1024.8,431.7 1030.0,429.5"/><path d="M720.6,707.9 C724.3,703.9 735.7,692.0 742.7,683.7 C749.7,675.4 755.4,665.9 762.5,658.1 C769.7,650.3 777.0,643.2 785.6,637.0 C794.3,630.9 805.5,627.3 814.6,621.4 C823.7,615.4 833.2,609.3 840.3,601.3 C847.4,593.2 852.3,583.0 857.0,573.2 C861.7,563.3 863.6,552.0 868.5,542.2 C873.4,532.4 879.3,522.6 886.3,514.4 C893.3,506.2 901.8,499.4 910.7,493.2 C919.5,486.9 929.7,482.0 939.5,476.9 C949.3,471.8 959.4,467.4 969.4,462.7 C979.4,458.1 989.4,453.6 999.5,449.2 C1009.6,444.8 1024.9,438.5 1030.0,436.4"/><path d="M724.5,707.4 C728.2,703.5 739.5,692.0 746.5,684.0 C753.5,675.9 759.2,666.7 766.4,659.2 C773.5,651.8 780.8,645.0 789.4,639.2 C798.0,633.3 809.0,629.8 817.9,624.1 C826.9,618.3 836.4,612.3 843.3,604.5 C850.3,596.6 855.0,586.5 859.6,576.9 C864.3,567.2 866.3,556.1 871.1,546.6 C876.0,537.0 881.8,527.4 888.8,519.4 C895.7,511.4 904.0,504.7 912.7,498.6 C921.4,492.5 931.4,487.7 941.0,482.7 C950.6,477.8 960.6,473.4 970.4,468.9 C980.2,464.4 990.1,460.0 1000.1,455.8 C1010.0,451.5 1025.0,445.5 1030.0,443.4"/><path d="M728.5,706.9 C732.2,703.1 743.4,691.9 750.3,684.2 C757.3,676.4 763.1,667.5 770.2,660.3 C777.4,653.2 784.8,646.9 793.3,641.3 C801.8,635.7 812.5,632.4 821.4,626.8 C830.2,621.2 839.6,615.4 846.4,607.7 C853.2,600.1 857.8,590.1 862.4,580.7 C866.9,571.2 869.0,560.3 873.8,551.0 C878.6,541.6 884.4,532.3 891.2,524.5 C898.1,516.7 906.3,510.1 914.8,504.2 C923.4,498.2 933.2,493.5 942.6,488.6 C952.0,483.8 961.8,479.5 971.4,475.2 C981.1,470.8 990.8,466.5 1000.6,462.4 C1010.3,458.3 1025.1,452.5 1030.0,450.5"/><path d="M732.6,706.3 C736.2,702.7 747.3,691.9 754.2,684.4 C761.2,676.9 767.0,668.3 774.2,661.5 C781.3,654.7 788.8,648.8 797.2,643.5 C805.7,638.2 816.1,634.9 824.8,629.5 C833.5,624.1 842.8,618.6 849.5,611.1 C856.2,603.6 860.6,593.7 865.1,584.5 C869.6,575.2 871.7,564.6 876.5,555.5 C881.3,546.3 887.0,537.3 893.8,529.7 C900.5,522.0 908.5,515.6 916.9,509.8 C925.3,503.9 934.9,499.3 944.2,494.6 C953.4,489.9 963.0,485.7 972.5,481.5 C982.0,477.3 991.5,473.2 1001.1,469.2 C1010.7,465.2 1025.2,459.6 1030.0,457.7"/><path d="M736.7,705.8 C740.3,702.3 751.3,691.8 758.2,684.7 C765.1,677.5 771.0,669.1 778.1,662.6 C785.3,656.2 792.8,650.8 801.2,645.7 C809.6,640.7 819.7,637.5 828.3,632.3 C836.9,627.1 846.0,621.7 852.6,614.4 C859.2,607.1 863.5,597.4 867.9,588.4 C872.4,579.3 874.5,569.0 879.2,560.0 C883.9,551.1 889.7,542.3 896.3,534.9 C903.0,527.4 910.8,521.2 919.1,515.5 C927.3,509.8 936.7,505.3 945.8,500.7 C954.9,496.1 964.2,492.0 973.5,487.9 C982.8,483.8 992.2,479.9 1001.6,476.1 C1011.0,472.2 1025.3,466.9 1030.0,465.0"/><path d="M740.9,705.2 C744.4,701.8 755.3,691.8 762.2,684.9 C769.1,678.0 775.0,670.0 782.1,663.8 C789.3,657.7 796.9,652.7 805.2,648.0 C813.5,643.2 823.4,640.1 831.9,635.1 C840.3,630.1 849.3,625.0 855.8,617.8 C862.3,610.7 866.4,601.1 870.8,592.3 C875.1,583.4 877.3,573.3 882.0,564.7 C886.7,556.0 892.3,547.4 898.9,540.2 C905.4,532.9 913.2,526.8 921.3,521.2 C929.4,515.6 938.5,511.3 947.4,506.8 C956.3,502.3 965.5,498.4 974.6,494.4 C983.7,490.5 992.9,486.7 1002.1,483.0 C1011.4,479.3 1025.4,474.2 1030.0,472.4"/><path d="M745.1,704.7 C748.6,701.4 759.4,691.8 766.2,685.1 C773.1,678.5 779.0,670.8 786.2,665.0 C793.4,659.2 801.0,654.7 809.3,650.2 C817.5,645.7 827.2,642.8 835.5,637.9 C843.8,633.1 852.7,628.2 859.0,621.3 C865.4,614.3 869.3,604.9 873.6,596.2 C877.9,587.6 880.1,577.8 884.8,569.3 C889.4,560.9 895.1,552.5 901.5,545.5 C907.9,538.4 915.5,532.4 923.5,527.0 C931.4,521.6 940.4,517.3 949.1,513.0 C957.8,508.7 966.7,504.8 975.7,501.0 C984.6,497.2 993.6,493.5 1002.7,490.0 C1011.7,486.5 1025.4,481.6 1030.0,479.9"/><path d="M749.3,704.1 C752.8,701.0 763.5,691.7 770.3,685.4 C777.2,679.1 783.1,671.7 790.3,666.2 C797.5,660.7 805.2,656.7 813.3,652.5 C821.5,648.3 830.9,645.4 839.1,640.8 C847.2,636.2 856.0,631.5 862.3,624.7 C868.5,618.0 872.3,608.7 876.5,600.2 C880.7,591.8 883.0,582.2 887.6,574.0 C892.2,565.8 897.8,557.7 904.1,550.9 C910.5,544.0 917.9,538.1 925.7,532.9 C933.4,527.6 942.2,523.5 950.7,519.3 C959.2,515.1 968.0,511.3 976.8,507.6 C985.5,503.9 994.4,500.4 1003.2,497.1 C1012.1,493.7 1025.5,489.0 1030.0,487.4"/><path d="M753.6,703.5 C757.1,700.5 767.6,691.7 774.5,685.6 C781.3,679.6 787.3,672.5 794.5,667.4 C801.6,662.2 809.4,658.8 817.5,654.8 C825.5,650.9 834.7,648.1 842.7,643.7 C850.8,639.3 859.4,634.8 865.5,628.2 C871.7,621.7 875.3,612.5 879.4,604.3 C883.6,596.0 885.9,586.8 890.5,578.8 C895.0,570.8 900.5,563.0 906.8,556.3 C913.0,549.7 920.3,543.9 927.9,538.8 C935.5,533.7 944.1,529.7 952.4,525.6 C960.7,521.5 969.3,517.9 977.9,514.3 C986.4,510.8 995.1,507.4 1003.8,504.2 C1012.5,501.0 1025.6,496.5 1030.0,495.0"/><path d="M757.9,702.9 C761.3,700.1 771.8,691.6 778.6,685.9 C785.4,680.2 791.5,673.4 798.6,668.6 C805.8,663.8 813.7,660.8 821.7,657.1 C829.6,653.5 838.6,650.9 846.4,646.6 C854.3,642.4 862.9,638.2 868.8,631.8 C874.8,625.4 878.3,616.4 882.3,608.4 C886.4,600.3 888.8,591.3 893.3,583.6 C897.9,575.8 903.3,568.3 909.5,561.8 C915.6,555.3 922.7,549.7 930.2,544.8 C937.6,539.8 946.0,535.9 954.1,532.0 C962.2,528.0 970.6,524.5 979.0,521.1 C987.4,517.7 995.8,514.5 1004.3,511.4 C1012.8,508.3 1025.7,504.1 1030.0,502.7"/><path d="M762.2,702.4 C765.7,699.7 776.0,691.6 782.8,686.1 C789.6,680.7 795.7,674.3 802.9,669.8 C810.0,665.4 818.0,662.9 825.9,659.5 C833.7,656.1 842.4,653.6 850.2,649.6 C857.9,645.6 866.3,641.5 872.2,635.3 C878.0,629.1 881.3,620.3 885.3,612.5 C889.3,604.6 891.8,595.9 896.2,588.4 C900.7,580.9 906.1,573.6 912.2,567.3 C918.2,561.1 925.2,555.6 932.5,550.8 C939.7,546.0 947.9,542.2 955.8,538.4 C963.7,534.6 971.9,531.2 980.1,527.9 C988.3,524.6 996.6,521.6 1004.9,518.7 C1013.2,515.8 1025.8,511.8 1030.0,510.4"/><path d="M766.6,701.8 C770.0,699.2 780.3,691.5 787.0,686.4 C793.8,681.3 799.9,675.1 807.1,671.1 C814.3,667.0 822.3,664.9 830.1,661.9 C837.9,658.8 846.3,656.4 853.9,652.6 C861.5,648.7 869.8,644.9 875.5,638.9 C881.3,632.9 884.4,624.2 888.3,616.6 C892.2,609.0 894.7,600.5 899.2,593.3 C903.6,586.0 909.0,579.0 914.9,572.9 C920.8,566.9 927.6,561.5 934.8,556.9 C941.9,552.2 949.8,548.6 957.5,544.9 C965.3,541.2 973.2,537.9 981.2,534.8 C989.2,531.6 997.3,528.8 1005.5,526.0 C1013.6,523.2 1025.9,519.5 1030.0,518.2"/><path d="M771.1,701.2 C774.4,698.8 784.6,691.5 791.3,686.7 C798.0,681.8 804.2,676.0 811.4,672.3 C818.6,668.6 826.7,667.0 834.4,664.2 C842.1,661.5 850.3,659.2 857.7,655.6 C865.1,651.9 873.3,648.3 878.9,642.5 C884.5,636.8 887.4,628.2 891.3,620.8 C895.2,613.4 897.7,605.2 902.1,598.2 C906.5,591.1 911.8,584.4 917.6,578.5 C923.5,572.7 930.1,567.5 937.1,563.0 C944.0,558.5 951.7,555.0 959.3,551.4 C966.8,547.9 974.6,544.7 982.4,541.7 C990.2,538.7 998.1,536.0 1006.0,533.4 C1014.0,530.8 1026.0,527.3 1030.0,526.1"/><path d="M775.5,700.6 C778.9,698.3 788.9,691.4 795.6,686.9 C802.3,682.4 808.5,676.9 815.7,673.6 C822.9,670.2 831.0,669.1 838.7,666.6 C846.3,664.1 854.2,662.0 861.5,658.6 C868.8,655.2 876.9,651.8 882.3,646.2 C887.8,640.6 890.5,632.2 894.3,625.0 C898.1,617.8 900.7,609.9 905.1,603.1 C909.4,596.3 914.7,589.9 920.4,584.2 C926.1,578.5 932.6,573.5 939.4,569.2 C946.2,564.8 953.6,561.4 961.0,558.0 C968.4,554.6 975.9,551.5 983.5,548.7 C991.1,545.8 998.8,543.3 1006.6,540.8 C1014.3,538.4 1026.1,535.2 1030.0,534.0"/><path d="M780.0,700.0 C783.3,697.9 793.2,691.4 799.9,687.2 C806.6,683.0 812.8,677.8 820.0,674.8 C827.2,671.8 835.5,671.3 843.0,669.1 C850.6,666.9 858.2,664.8 865.3,661.6 C872.4,658.4 880.4,655.3 885.8,649.9 C891.1,644.5 893.7,636.2 897.4,629.2 C901.1,622.3 903.8,614.6 908.1,608.1 C912.4,601.5 917.6,595.4 923.2,589.9 C928.8,584.5 935.1,579.6 941.7,575.4 C948.3,571.1 955.6,567.9 962.8,564.6 C969.9,561.3 977.3,558.4 984.7,555.7 C992.1,553.0 999.6,550.6 1007.2,548.3 C1014.7,546.0 1026.2,543.0 1030.0,542.0"/></g>
<!--/WLINES-->
  <ellipse cx="807.7" cy="617.7" rx="9.9" ry="7.3" fill="#e9dc2f"/>
  <ellipse cx="891.8" cy="497.1" rx="9.9" ry="7.3" fill="#6e2a85"/>
 </g>
 <text x="297" y="211.9" font-size="29.5" font-weight="bold" fill="#f00a0a" stroke="#f00a0a" stroke-width="0.7" textLength="582" lengthAdjust="spacingAndGlyphs">STEPS TO FORMULATE A RESEARCH</text>
 <text x="305" y="246.5" font-size="29" font-weight="bold" fill="#f00a0a" stroke="#f00a0a" stroke-width="0.7" textLength="567" lengthAdjust="spacingAndGlyphs">PROBLEM STATEMENT IN NURSING</text>
 <ellipse cx="122" cy="304.4" rx="10.1" ry="7.1" fill="#6a2580"/>
 <text x="135.4" y="311.4" font-size="24" font-weight="bold" fill="#7030a0" textLength="284.5" lengthAdjust="spacingAndGlyphs">Narrow down the Topic:</text>
 <g font-size="19.5" font-weight="bold" fill="#0c0c0c">
  <text x="134.3" y="350.4" textLength="800.7" lengthAdjust="spacing">Define a specific issue within the broad area. Focus on a particular population,</text>
  <text x="134.3" y="387" textLength="800.7" lengthAdjust="spacing">setting or practice. Focus on a specific aspect that is relevant, researchable &amp;</text>
  <text x="134.3" y="423.4" textLength="220" lengthAdjust="spacing">significant in practice.</text>
 </g>
 <circle cx="139" cy="454.2" r="2.6" fill="#c00000"/>
 <g font-size="19.5" font-weight="bold" fill="#c00000">
  <text x="162.5" y="460.8" textLength="772.5" lengthAdjust="spacing">Example : Prevention of pressure ulcers in post operative elderly patients in</text>
  <text x="162.5" y="497.2" textLength="147" lengthAdjust="spacing">surgical wards</text>
 </g>
 <g font-size="19.5" font-weight="bold" fill="#0c0c0c">
  <text x="163" y="535.1" textLength="271" lengthAdjust="spacing">Population: elderly patients</text>
  <text x="163" y="571.7" textLength="223.5" lengthAdjust="spacing">Setting: Surgical Ward</text>
  <text x="163" y="608.5" textLength="323.5" lengthAdjust="spacing">Issue: Pressure ulcer prevention</text>
 </g>
 <g id="arrows">
  <g id="arr1"><path d="M137.2,521 L148.6,527.3 L141,527.3 z" fill="none" stroke="#0c0c0c" stroke-width="1.1" stroke-linejoin="miter"/><path d="M140.6,527.1 L149.4,527.3 L137,535.2 z" fill="#0c0c0c"/></g>
  <use href="#arr1" y="36.8"/>
  <use href="#arr1" y="73.6"/>
 </g>
</g>
<!-- /SLIDE -->
<!-- PANEL -->
<g id="panel">
 <rect x="1014" y="37" width="266" height="642" fill="#ffffff"/>
 <rect x="1014" y="37" width="266" height="36" fill="#eef1f4"/>
 <defs>
  <g id="pmic" fill="none" stroke="#df6464" stroke-width="0.95">
   <rect x="2" y="0" width="4.1" height="6.6" rx="2.05"/>
   <path d="M0.1,5.9 a3.9,3.9 0 0 0 7.8,0"/>
   <path d="M4,9.8 v2.6 M2.1,12.5 h3.8"/>
   <path d="M-2.5,12.6 L10.6,0.1" stroke-width="1.1"/>
  </g>
  <g id="pvid" fill="none" stroke="#df6464" stroke-width="0.95">
   <rect x="0" y="1.8" width="8.6" height="8.6" rx="1.2"/>
   <path d="M8.6,4.6 L12.6,2.6 V9.6 L8.6,7.6"/>
   <path d="M0.6,12.3 L13.1,0.1" stroke-width="1.1"/>
  </g>
  <g id="plogo">
   <circle cx="0" cy="0" r="10.2" fill="#ffffff"/>
   <circle cx="0" cy="0" r="8.6" fill="none" stroke="#3b3f99" stroke-width="3"/>
   <path d="M-3,-5 q3,-2 6,0 l-0.5,2 h-5 z" fill="#6063b4"/>
   <path d="M-4.5,-2.5 h3.5 l-3.5,3.5 z M4.5,2 v3.5 h-3.5 z" fill="#e6632e"/>
   <path d="M-5,7.5 h10 l1.2,2.2 h-12.4 z" fill="#e45a2c"/>
  </g>
 </defs>
 <text x="1084.2" y="59.5" font-size="12" font-weight="bold" fill="#242433" textLength="82.9" lengthAdjust="spacingAndGlyphs">Participants (84)</text>
 <g fill="none" stroke="#6e6e78" stroke-width="1.3">
  <path d="M1243.5,50.2 h-4 a1.2,1.2 0 0 0 -1.2,1.2 v8.6 a1.2,1.2 0 0 0 1.2,1.2 h8.6 a1.2,1.2 0 0 0 1.2,-1.2 v-4"/>
  <path d="M1244.2,55.3 L1249.6,49.9 M1245.6,49.9 h4 v4"/>
  <path d="M1262.3,50.9 L1270.9,59.5 M1270.9,50.9 L1262.3,59.5"/>
 </g>
 <rect x="1030.8" y="82.6" width="236.2" height="25.6" rx="6" fill="#ffffff" stroke="#b8b8be" stroke-width="1"/>
 <circle cx="1045.2" cy="94.2" r="4.3" fill="none" stroke="#5c5c66" stroke-width="1.2"/>
 <path d="M1048.3,97.3 L1051,100" stroke="#5c5c66" stroke-width="1.3"/>
 <text x="1053.2" y="98.6" font-size="11.6" fill="#75757d" textLength="80" lengthAdjust="spacingAndGlyphs">Find a participant</text>
 <rect x="1273" y="111" width="7" height="521" fill="#f1f1f1"/>
 <rect x="1273.3" y="111.2" width="6.4" height="101" rx="3.2" fill="#c1c1c1"/>
 <rect x="1032.7" y="115.8" width="22.2" height="22.2" rx="4.5" fill="#f39c1e"/>
 <text x="1043.8" y="130.7" font-size="10.6" font-weight="bold" fill="#ffffff" text-anchor="middle">MP</text>
 <text x="1064.7" y="132.2" font-size="10.8" fill="#42424c" textLength="81.6" lengthAdjust="spacingAndGlyphs">Mayuri Patel (Me)</text>
 <use href="#pmic" x="1230.1" y="120.9"/>
 <use href="#pvid" x="1247.5" y="121.0"/>
 <use href="#plogo" x="1043.9" y="160.9"/>
 <text x="1064.7" y="166.2" font-size="10.8" fill="#42424c" textLength="122.3" lengthAdjust="spacingAndGlyphs">SANDRA SHROFF COLLE...</text>
 <use href="#pmic" x="1230.1" y="154.9"/>
 <use href="#pvid" x="1247.5" y="155.0"/>
 <text x="1194.3" y="166.2" font-size="10.8" fill="#42424c" textLength="28.2" lengthAdjust="spacingAndGlyphs">(Host)</text>
 <use href="#plogo" x="1043.9" y="194.9"/>
 <text x="1064.7" y="200.2" font-size="10.8" fill="#42424c" textLength="128.7" lengthAdjust="spacingAndGlyphs">SANDRA SHROFF COLLEGE</text>
 <use href="#pmic" x="1230.1" y="188.9"/>
 <use href="#pvid" x="1247.5" y="189.0"/>
 <rect x="1207.3" y="190.8" width="13.8" height="9.7" rx="1.5" fill="#1fa53f"/><path d="M1214.2,192.1 l-2.4,2.6 h1.6 v2.4 h1.6 v-2.4 h1.6 z" fill="#ffffff"/>
 <rect x="1032.7" y="217.8" width="22.2" height="22.2" rx="4.5" fill="#2e4760"/>
 <text x="1043.8" y="232.7" font-size="10.6" font-weight="bold" fill="#ffffff" text-anchor="middle">SC</text>
 <text x="1064.7" y="234.2" font-size="10.8" fill="#42424c" textLength="98.9" lengthAdjust="spacingAndGlyphs">Suparna Chakraborty</text>
 <g transform="translate(1230.4,222.9)"><rect x="1.5" y="0" width="4.6" height="7.2" rx="2.3" fill="#8a8a94"/><path d="M0,5.6 a3.8,3.8 0 0 0 7.6,0 M3.8,9.4 v2.4 M2,12 h3.6" fill="none" stroke="#8a8a94" stroke-width="1"/></g>
 <use href="#pvid" x="1247.5" y="223.0"/>
 <rect x="1032.7" y="251.8" width="22.2" height="22.2" rx="4.5" fill="#c9302c"/>
 <text x="1043.8" y="266.7" font-size="10.6" font-weight="bold" fill="#ffffff" text-anchor="middle">AY</text>
 <text x="1064.7" y="268.2" font-size="10.8" fill="#42424c" textLength="75.2" lengthAdjust="spacingAndGlyphs">Akanksha Yadav</text>
 <use href="#pmic" x="1230.1" y="256.9"/>
 <use href="#pvid" x="1247.5" y="257.0"/>
 <rect x="1032.7" y="285.8" width="22.2" height="22.2" rx="4.5" fill="#29a95e"/>
 <text x="1043.8" y="300.7" font-size="10.6" font-weight="bold" fill="#ffffff" text-anchor="middle">AT</text>
 <text x="1064.7" y="302.2" font-size="10.8" fill="#42424c" textLength="102.7" lengthAdjust="spacingAndGlyphs">Arti  Thorat( 7th -sem)</text>
 <use href="#pmic" x="1230.1" y="290.9"/>
 <use href="#pvid" x="1247.5" y="291.0"/>
 <rect x="1032.7" y="319.8" width="22.2" height="22.2" rx="4.5" fill="#d9580d"/>
 <text x="1043.8" y="334.7" font-size="10.6" font-weight="bold" fill="#ffffff" text-anchor="middle">AP</text>
 <text x="1064.7" y="336.2" font-size="10.8" fill="#42424c" textLength="41.4" lengthAdjust="spacingAndGlyphs">Arti Patel</text>
 <use href="#pmic" x="1230.1" y="324.9"/>
 <use href="#pvid" x="1247.5" y="325.0"/>
 <rect x="1032.7" y="353.8" width="22.2" height="22.2" rx="4.5" fill="#29a95e"/>
 <text x="1043.8" y="368.7" font-size="10.6" font-weight="bold" fill="#ffffff" text-anchor="middle">AA</text>
 <text x="1064.7" y="370.2" font-size="10.8" fill="#42424c" textLength="88.4" lengthAdjust="spacingAndGlyphs">Arunima and Arjun</text>
 <use href="#pmic" x="1230.1" y="358.9"/>
 <use href="#pvid" x="1247.5" y="359.0"/>
 <rect x="1032.7" y="387.8" width="22.2" height="22.2" rx="4.5" fill="#2e4760"/>
 <text x="1043.8" y="402.7" font-size="10.6" font-weight="bold" fill="#ffffff" text-anchor="middle">BP</text>
 <text x="1064.7" y="404.2" font-size="10.8" fill="#42424c" textLength="47.9" lengthAdjust="spacingAndGlyphs">Bindi Patel</text>
 <use href="#pmic" x="1230.1" y="392.9"/>
 <use href="#pvid" x="1247.5" y="393.0"/>
 <rect x="1032.7" y="421.8" width="22.2" height="22.2" rx="4.5" fill="#2e4760"/>
 <text x="1043.8" y="436.7" font-size="10.6" font-weight="bold" fill="#ffffff" text-anchor="middle">BC</text>
 <text x="1064.7" y="438.2" font-size="10.8" fill="#42424c" textLength="57.4" lengthAdjust="spacingAndGlyphs">Birari chetan</text>
 <use href="#pmic" x="1230.1" y="426.9"/>
 <use href="#pvid" x="1247.5" y="427.0"/>
 <rect x="1032.7" y="455.8" width="22.2" height="22.2" rx="4.5" fill="#e8cfd0"/><rect x="1037" y="459.8" width="13" height="16" fill="#5d9a8e"/><rect x="1040" y="464.8" width="2.5" height="10" fill="#2a2020"/><rect x="1044" y="464.8" width="2" height="10" fill="#b0506a"/><rect x="1033.5" y="461.8" width="2.5" height="13" fill="#c8a860"/>
 <text x="1064.7" y="472.2" font-size="10.8" fill="#42424c" textLength="47.5" lengthAdjust="spacingAndGlyphs">Brijal Patel</text>
 <use href="#pmic" x="1230.1" y="460.9"/>
 <use href="#pvid" x="1247.5" y="461.0"/>
 <rect x="1032.7" y="489.8" width="22.2" height="22.2" rx="4.5" fill="#8e44ad"/>
 <text x="1043.8" y="504.7" font-size="10.6" font-weight="bold" fill="#ffffff" text-anchor="middle">CP</text>
 <text x="1064.7" y="506.2" font-size="10.8" fill="#42424c" textLength="80.3" lengthAdjust="spacingAndGlyphs">Chandani pandya</text>
 <use href="#pmic" x="1230.1" y="494.9"/>
 <use href="#pvid" x="1247.5" y="495.0"/>
 <rect x="1032.7" y="523.8" width="22.2" height="22.2" rx="4.5" fill="#cf3b2b"/>
 <text x="1043.8" y="538.7" font-size="10.6" font-weight="bold" fill="#ffffff" text-anchor="middle">CS</text>
 <text x="1064.7" y="540.2" font-size="10.8" fill="#42424c" textLength="115.7" lengthAdjust="spacingAndGlyphs">Chaudhari sejal sunilbhai</text>
 <use href="#pmic" x="1230.1" y="528.9"/>
 <use href="#pvid" x="1247.5" y="529.0"/>
 <rect x="1032.7" y="557.8" width="22.2" height="22.2" rx="4.5" fill="#2e4760"/>
 <text x="1043.8" y="572.7" font-size="10.6" font-weight="bold" fill="#ffffff" text-anchor="middle">DG</text>
 <text x="1064.7" y="574.2" font-size="10.8" fill="#42424c" textLength="64.8" lengthAdjust="spacingAndGlyphs">Darshna Gavli</text>
 <use href="#pmic" x="1230.1" y="562.9"/>
 <use href="#pvid" x="1247.5" y="563.0"/>
 <rect x="1032.7" y="591.8" width="22.2" height="22.2" rx="4.5" fill="#1a0c0c"/><path d="M1040,596.8 q4,-4 8,0 v4 l3,10 h-12 l1,-9 z" fill="#c0282a"/><circle cx="1044" cy="599.3" r="2.6" fill="#e0a080"/>
 <text x="1064.7" y="608.2" font-size="10.8" fill="#42424c" textLength="100.6" lengthAdjust="spacingAndGlyphs">Daulat Kuwar Rathore</text>
 <use href="#pmic" x="1230.1" y="596.9"/>
 <use href="#pvid" x="1247.5" y="597.0"/>
 <rect x="1014" y="633" width="258" height="46" fill="#ffffff"/>
 <path d="M1032.7,633 v-3 a4.5,4.5 0 0 1 4.5,-4.5 h13.2 a4.5,4.5 0 0 1 4.5,4.5 v3 z" fill="#e4e4e8"/>
 <path d="M1039,633 a4.8,4.8 0 0 1 9.6,0 z" fill="#b8b8c0"/>
 <path d="M1230.8,633 L1232.6,631.6 M1236.4,633 L1238.2,631.4 M1249,633 L1250.6,631.8 M1256,632.6 L1260,631.6" stroke="#dc5b5b" stroke-width="1"/>
 <rect x="1064.3" y="647.6" width="44.3" height="18.9" rx="5" fill="#ffffff" stroke="#8c8c94" stroke-width="1"/>
 <text x="1073.8" y="660.7" font-size="11.8" fill="#2c2c36" textLength="24.4" lengthAdjust="spacingAndGlyphs">Invite</text>
 <rect x="1158.4" y="647.6" width="73.4" height="18.9" rx="5" fill="#ffffff" stroke="#8c8c94" stroke-width="1"/>
 <text x="1167.8" y="660.7" font-size="11.8" fill="#2c2c36" textLength="54" lengthAdjust="spacingAndGlyphs">Unmute me</text>
</g>
<!-- /PANEL -->
<!-- TASKBAR -->
<g id="taskbar">
 <rect x="0" y="679" width="1280" height="39" fill="url(#tb)"/>
 <rect x="0" y="679" width="393" height="1" fill="#d6d4cc"/>
 <rect x="393" y="679" width="887" height="1.2" fill="#4d4d45"/>
 <!-- weather -->
 <path d="M17.2,701.2 a8.4,7 0 0 1 16.8,0 q-2.1,-1.6 -4.2,0 q-2.1,-1.6 -4.2,0 q-2.1,-1.6 -4.2,0 q-2.1,-1.6 -4.2,0 z" fill="#5fb4ee"/>
 <path d="M25.6,701 v6.2 a1.8,1.8 0 0 1 -3.6,0" fill="none" stroke="#555" stroke-width="1.2"/>
 <circle cx="32.5" cy="692.1" r="6.3" fill="#c42b1c"/>
 <text x="32.5" y="695.6" font-size="9" font-weight="bold" fill="#ffffff" text-anchor="middle">4</text>
 <text x="42.5" y="696.3" font-size="10.8" fill="#262626" textLength="59.3" lengthAdjust="spacingAndGlyphs">Rain showers</text>
 <text x="42.5" y="709.3" font-size="10.8" fill="#5a5a5a" textLength="73" lengthAdjust="spacingAndGlyphs">In the afternoon</text>
 <!-- windows -->
 <defs>
  <linearGradient id="wg" x1="0" y1="0" x2="1" y2="1"><stop offset="0" stop-color="#46c0f4"/><stop offset="1" stop-color="#0c6fd2"/></linearGradient>
 </defs>
 <rect x="208.6" y="689.8" width="9.4" height="9.4" fill="url(#wg)"/>
 <rect x="219" y="689.8" width="9.4" height="9.4" fill="url(#wg)"/>
 <rect x="208.6" y="700.1" width="9.4" height="9.4" fill="url(#wg)"/>
 <rect x="219" y="700.1" width="9.4" height="9.4" fill="url(#wg)"/>
 <!-- search -->
 <rect x="240.6" y="687.1" width="181.8" height="25" rx="12.5" fill="#faf7ef" stroke="#e2ded2" stroke-width="0.8"/>
 <circle cx="255.2" cy="698.4" r="4.4" fill="none" stroke="#222" stroke-width="1.5"/>
 <path d="M258.4,701.6 L261.6,704.8" stroke="#222" stroke-width="1.7" stroke-linecap="round"/>
 <text x="270.7" y="703.9" font-size="12.4" fill="#555555" textLength="33.9" lengthAdjust="spacingAndGlyphs">Search</text>
 <defs><linearGradient id="flm" x1="1" y1="0" x2="0" y2="1"><stop offset="0" stop-color="#ffd24a"/><stop offset="0.5" stop-color="#f7962a"/><stop offset="1" stop-color="#e8552a"/></linearGradient></defs>
 <path d="M392.5,700.5 Q403,691.5 417,692.2 Q409,700 399.5,708.2 z" fill="url(#flm)"/>
 <circle cx="396.6" cy="702.6" r="5" fill="#e45a2c"/>
 <circle cx="396.4" cy="702.8" r="3.6" fill="#3d6db8"/>
 <circle cx="395.2" cy="701.8" r="0.9" fill="#9cc0ea"/>
 <circle cx="386" cy="695.4" r="2.5" fill="#4d92d6"/>
 <circle cx="381.6" cy="693.6" r="0.6" fill="#4d92d6"/><circle cx="382.6" cy="697.6" r="0.6" fill="#4d92d6"/>
 <!-- task view -->
 <rect x="437.7" y="690.1" width="15.2" height="13.2" rx="1.5" fill="#f2f2f2" stroke="#d0d0d0" stroke-width="0.6"/>
 <rect x="433.2" y="695.2" width="15" height="13.6" rx="1.5" fill="#1f1f1f"/>
 <rect x="437.7" y="695.2" width="10.5" height="8.1" fill="#c4c4c4"/>
 <!-- copilot -->
 <defs>
  <linearGradient id="cpg" x1="0" y1="0" x2="0" y2="1"><stop offset="0" stop-color="#1fa2ea"/><stop offset="0.45" stop-color="#2fb8a0"/><stop offset="0.75" stop-color="#c8c824"/><stop offset="1" stop-color="#ee6a2a"/></linearGradient>
  <linearGradient id="cpg2" x1="0.3" y1="0" x2="0" y2="1"><stop offset="0" stop-color="#b848d8"/><stop offset="0.5" stop-color="#e8508a"/><stop offset="1" stop-color="#f7924a"/></linearGradient>
 </defs>
 <path d="M473.5,690.5 h8.5 q2,0 2.6,2 l0.6,2 h-4.5 q-1.6,0 -2,1.6 l-2.6,9.6 q-0.5,1.8 -2.3,1.8 h-0.8 q-2.4,0 -2.4,-2.4 v-11.2 q0,-3.4 2.9,-3.4 z" fill="url(#cpg)"/>
 <path d="M481.5,692.2 q0.4,-1.7 2.3,-1.7 q1,0 1.4,1.4 l0.6,2.6 h-4.8 z" fill="#1550c0"/>
 <path d="M486.5,707.5 h-8.5 q-2,0 -2.6,-2 l-0.6,-2 h4.5 q1.6,0 2,-1.6 l2.6,-9.6 q0.5,-1.8 2.3,-1.8 h0.8 q2.4,0 2.4,2.4 v11.2 q0,3.4 -2.9,3.4 z" fill="url(#cpg2)"/>
 <!-- teams -->
 <circle cx="518.5" cy="692.5" r="2.6" fill="#7b83eb"/>
 <circle cx="523.5" cy="694" r="2" fill="#5059c9"/>
 <path d="M514,697 h12.6 v6.6 a4.2,4.2 0 0 1 -8.4,0 z" fill="#7b83eb"/>
 <rect x="506.3" y="694.5" width="11" height="11" rx="1.2" fill="#4b53bc"/>
 <text x="511.8" y="703.3" font-size="8.6" font-weight="bold" fill="#ffffff" text-anchor="middle">T</text>
 <!-- explorer -->
 <path d="M543.3,692 a1.2,1.2 0 0 1 1.2,-1.2 h5.8 l2,2 h10.1 a1.2,1.2 0 0 1 1.2,1.2 v13.6 h-20.3 z" fill="#e9b02a"/>
 <rect x="543.3" y="694.3" width="20.3" height="14.2" rx="1" fill="#f8d465"/>
 <rect x="547.3" y="703" width="12.4" height="4" rx="0.6" fill="#1c78c4"/>
 <rect x="550.4" y="712.8" width="6" height="2.4" rx="1.2" fill="#6b6b6b"/>
 <!-- MA tile -->
 <defs><linearGradient id="mag" x1="0" y1="0" x2="1" y2="1"><stop offset="0" stop-color="#3457e6"/><stop offset="1" stop-color="#6a38e0"/></linearGradient></defs>
 <rect x="579.8" y="689.1" width="20.4" height="20.3" fill="url(#mag)"/>
 <path d="M583.5,704.5 L589.5,693.5 h2.2 L585.7,704.5 z M588,704.5 L594,693.5 h2.4 l0.8,11 h-2.2 l-0.3,-4 l-2.3,4 z" fill="#ffffff"/>
 <!-- edge -->
 <defs>
  <linearGradient id="edg" x1="0" y1="1" x2="1" y2="0"><stop offset="0" stop-color="#0c59a4"/><stop offset="0.5" stop-color="#1e9be0"/><stop offset="1" stop-color="#4ec85a"/></linearGradient>
 </defs>
 <circle cx="626.8" cy="699.3" r="10.3" fill="url(#edg)"/>
 <path d="M621,700 a6,5 0 0 1 11.5,-1.5 h-8 a3.6,3.6 0 0 0 7,2.8 q-4,5 -10.5,-1.3 z" fill="#ffffff" fill-opacity="0.9"/>
 <!-- store -->
 <path d="M658.5,692.3 v-1.3 a3,2 0 0 1 9.5,0 v1.3" fill="none" stroke="#3a8fdc" stroke-width="1.3"/>
 <rect x="653.4" y="692.2" width="19.5" height="16.6" rx="1.8" fill="#1d4f91"/>
 <rect x="659.2" y="696.8" width="3.6" height="3.6" fill="#f25022"/><rect x="663.4" y="696.8" width="3.6" height="3.6" fill="#7fba00"/>
 <rect x="659.2" y="701" width="3.6" height="3.6" fill="#00a4ef"/><rect x="663.4" y="701" width="3.6" height="3.6" fill="#ffb900"/>
 <!-- chrome -->
 <circle cx="699.7" cy="699.4" r="10.2" fill="#db4437"/>
 <path d="M699.7,699.4 L708.5,694.3 A10.2,10.2 0 0 1 701,709.5 z" fill="#f4c20d"/>
 <path d="M699.7,699.4 L701,709.5 A10.2,10.2 0 0 1 690.4,694.8 z" fill="#0f9d58"/>
 <circle cx="699.7" cy="699.4" r="4.6" fill="#ffffff"/>
 <circle cx="699.7" cy="699.4" r="3.5" fill="#4285f4"/>
 <circle cx="706.8" cy="691.4" r="6" fill="#e8e2dc" stroke="#ffffff" stroke-width="1"/>
 <circle cx="706.8" cy="690" r="2.3" fill="#c8a890"/>
 <path d="M702.5,696 a4.3,3.6 0 0 1 8.6,0" fill="#8a8a8a"/>
 <rect x="697.1" y="712.8" width="6" height="2.4" rx="1.2" fill="#6b6b6b"/>
 <!-- powerpoint -->
 <circle cx="737.2" cy="699.3" r="9.4" fill="#ed6c47"/>
 <path d="M737.2,689.9 a9.4,9.4 0 0 1 9.4,9.4 h-9.4 z" fill="#ff8f6b"/>
 <rect x="726.2" y="693.8" width="11" height="11" rx="1.2" fill="#c43e1c"/>
 <text x="731.7" y="702.7" font-size="8.6" font-weight="bold" fill="#ffffff" text-anchor="middle">P</text>
 <!-- word -->
 <rect x="767" y="690.3" width="16" height="18" rx="1.4" fill="#2b7cd3"/>
 <rect x="767" y="696.3" width="16" height="6" fill="#185abd"/>
 <rect x="767" y="702.3" width="16" height="6" rx="1" fill="#103f91"/>
 <rect x="763.3" y="694" width="11" height="11" rx="1.2" fill="#185abd"/>
 <text x="768.8" y="702.9" font-size="8.4" font-weight="bold" fill="#ffffff" text-anchor="middle">W</text>
 <rect x="770.5" y="712.8" width="6" height="2.4" rx="1.2" fill="#6b6b6b"/>
 <!-- acrobat -->
 <rect x="801.3" y="689.7" width="18.3" height="18.3" rx="2.6" fill="#b30b00"/>
 <path d="M804.5,704.5 q4,-4 6,-11 q1,-2.5 1.6,0 q1,6 5.5,8.5 q-6,-1.5 -13,2.5" fill="none" stroke="#ffffff" stroke-width="1.2"/>
 <!-- whatsapp -->
 <circle cx="846.8" cy="699" r="8.8" fill="none" stroke="#25a85a" stroke-width="2.1"/>
 <path d="M838.2,708.4 l1.6,-4.5 l3,3 z" fill="#25a85a"/>
 <path d="M843,695 q0.5,-1 1.5,-0.5 l1,2 q-0.8,1 0,2 q1,1.4 2.4,2.2 q1,0.4 1.8,-0.5 l2,1 q0.4,1 -0.6,1.8 q-2,1.2 -5,-1 q-3,-2.5 -3.5,-5 q-0.1,-1.4 0.4,-2 z" fill="#25a85a"/>
 <circle cx="854.2" cy="692.3" r="6.6" fill="#1573d6" stroke="#ffffff" stroke-width="0.8"/>
 <text x="854.2" y="695.6" font-size="9" font-weight="bold" fill="#ffffff" text-anchor="middle" textLength="7" lengthAdjust="spacingAndGlyphs">11</text>
 <rect x="844" y="712.8" width="6" height="2.4" rx="1.2" fill="#6b6b6b"/>
 <!-- excel -->
 <rect x="877.5" y="690.3" width="16.3" height="18" rx="1.4" fill="#21a366"/>
 <rect x="877.5" y="696.3" width="16.3" height="6" fill="#107c41"/>
 <rect x="877.5" y="702.3" width="16.3" height="6" rx="1" fill="#185c37"/>
 <rect x="885.6" y="690.3" width="8.2" height="6" fill="#33c481"/>
 <rect x="873.8" y="694" width="11" height="11" rx="1.2" fill="#107c41"/>
 <text x="879.3" y="702.8" font-size="8.4" font-weight="bold" fill="#ffffff" text-anchor="middle">X</text>
 <!-- zoom -->
 <rect x="904.3" y="684.4" width="29.7" height="30.1" rx="4" fill="#eef3ee" stroke="#e2e8e2" stroke-width="0.6"/>
 <circle cx="920.3" cy="699.1" r="10" fill="#0b5cff"/>
 <text x="920.3" y="700.6" font-size="5" font-weight="bold" fill="#ffffff" text-anchor="middle">zoom</text>
 <rect x="915" y="712.8" width="11.3" height="2.6" rx="1.3" fill="#1a6fd8"/>
 <rect x="954.1" y="712.8" width="6" height="2.4" rx="1.2" fill="#6b6b6b"/>
 <!-- tray -->
 <path d="M1032.4,702.2 L1036.8,697.5 L1041.2,702.2" fill="none" stroke="#222" stroke-width="1.3"/>
 <path d="M1057,703.6 a3,3 0 0 1 0.6,-5.9 a4.4,4 0 0 1 8.4,-1 a3.4,3.4 0 0 1 3.8,6.9 z" fill="#9a9a9a" stroke="#3a3a3a" stroke-width="1"/>
 <rect x="1083.2" y="693.3" width="4.4" height="6.6" rx="2.2" fill="#2c6fd6"/>
 <path d="M1081.8,698.6 a3.6,3.6 0 0 0 7.2,0 M1085.4,702.2 v1.8" fill="none" stroke="#2c6fd6" stroke-width="1"/>
 <path d="M1090.2,701.2 L1099,697.2 L1095,706 L1094,702.2 z" fill="none" stroke="#2c6fd6" stroke-width="1.1" stroke-linejoin="round"/>
 <text x="1112.4" y="697.2" font-size="10.3" fill="#222" textLength="19.3" lengthAdjust="spacingAndGlyphs">ENG</text>
 <text x="1117.1" y="710" font-size="10.3" fill="#222" textLength="9.5" lengthAdjust="spacingAndGlyphs">IN</text>
 <path d="M1147.2,698 a9.2,9.2 0 0 1 12.8,0 M1149.2,700.2 a6.2,6.2 0 0 1 8.8,0 M1151.2,702.3 a3.2,3.2 0 0 1 4.8,0" fill="none" stroke="#222" stroke-width="1.1"/>
 <circle cx="1153.6" cy="703.6" r="1" fill="#222"/>
 <path d="M1167,697.6 h2.6 l3.6,-3 v10 l-3.6,-3 h-2.6 z" fill="none" stroke="#222" stroke-width="1"/>
 <path d="M1175.4,697 a4,4 0 0 1 0,5.8 M1177.6,695.2 a6.5,6.5 0 0 1 0,9.4" fill="none" stroke="#222" stroke-width="1"/>
 <rect x="1187.3" y="696" width="11" height="8" rx="1.2" fill="none" stroke="#222" stroke-width="1.1"/>
 <rect x="1189" y="697.7" width="7.6" height="4.6" fill="#222"/>
 <rect x="1198.6" y="698.4" width="1.4" height="3.2" fill="#222"/>
 <text x="1265.4" y="696.2" font-size="10.8" fill="#222" text-anchor="end" textLength="42.3" lengthAdjust="spacingAndGlyphs">11:32 AM</text>
 <text x="1265.4" y="710" font-size="10.8" fill="#222" text-anchor="end" textLength="51.4" lengthAdjust="spacingAndGlyphs">30-06-2025</text>
</g>
<!-- /TASKBAR -->
</svg>
</body></html>
